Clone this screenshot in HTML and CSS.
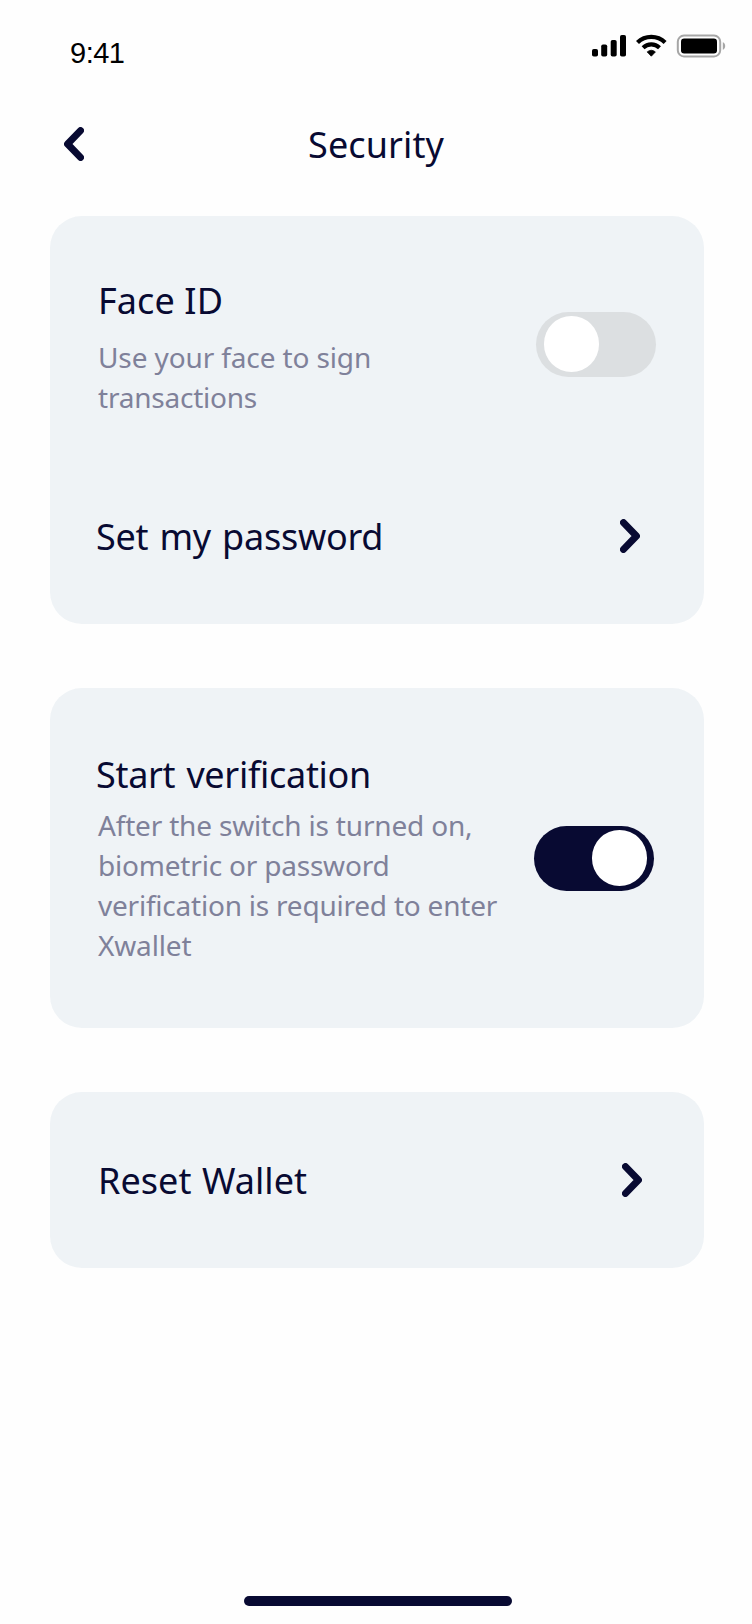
FILE: index.html
```html
<!DOCTYPE html>
<html lang="en">
<head>
<meta charset="utf-8">
<title>Security</title>
<link rel="stylesheet" href="styles.css">
</head>
<body>
<div class="screen">
  <div class="status">
    <span class="clock">9:41</span>
    <svg class="indicators" width="134" height="24" viewBox="0 0 134 24">
      <rect x="0" y="15" width="6" height="7.5" rx="1.8"/>
      <rect x="9.2" y="10.5" width="6" height="12" rx="1.8"/>
      <rect x="18.7" y="6" width="6" height="16.5" rx="1.8"/>
      <rect x="28" y="1" width="6" height="21.5" rx="1.8"/>
      <g fill="none" stroke="#000" stroke-width="4.2">
        <path d="M45.5 8.5A19.5 19.5 0 0 1 73.1 8.5"/>
        <path d="M51.1 13.7A12 12 0 0 1 67.5 13.7"/>
      </g>
      <path d="M55.2 17.9A6.6 6.6 0 0 1 63.4 17.9L59.3 22.2Z" stroke="#000" stroke-width=".8" stroke-linejoin="round"/>
      <rect x="85.8" y="1.6" width="42.4" height="20.8" rx="6.2" fill="none" stroke="#a6a6a6" stroke-width="2"/>
      <rect x="89" y="4.6" width="36" height="14.8" rx="3.2"/>
      <path d="M130.8 8.2C134 9.4 134 14.6 130.8 15.8Z" fill="#a6a6a6"/>
    </svg>
  </div>

  <header class="header">
    <svg class="chevron" width="20" height="34" viewBox="0 0 20 34"><path d="M16.5 3.6L3.6 17L16.5 30.4"/></svg>
    <h1 class="title security">Security</h1>
  </header>

  <main class="cards">
    <section class="card card-access">
      <div class="row row-face">
        <div class="copy">
          <h2 class="title face">Face ID</h2>
          <p class="note"><span class="use">Use your face to sign</span><br><span class="trans">transactions</span></p>
        </div>
        <div class="toggle"><span class="knob"></span></div>
      </div>
      <div class="row row-password">
        <h2 class="title password">Set my password</h2>
        <svg class="chevron" width="20" height="34" viewBox="0 0 20 34"><path d="M3.5 3.6L16.4 17L3.5 30.4"/></svg>
      </div>
    </section>

    <section class="card card-verify">
      <div class="row row-verify">
        <div class="copy">
          <h2 class="title start">Start verification</h2>
          <p class="note"><span class="v1">After the switch is turned on,</span><br><span class="v2">biometric or password</span><br><span class="v3">verification is required to enter</span><br><span class="v4">Xwallet</span></p>
        </div>
        <div class="toggle on"><span class="knob"></span></div>
      </div>
    </section>

    <section class="card card-reset">
      <div class="row row-reset">
        <h2 class="title reset">Reset Wallet</h2>
        <svg class="chevron" width="20" height="34" viewBox="0 0 20 34"><path d="M3.5 3.6L16.4 17L3.5 30.4"/></svg>
      </div>
    </section>
  </main>

  <div class="home"></div>
</div>
</body>
</html>
```
FILE: styles.css
```css
* { box-sizing: border-box; margin: 0; padding: 0; }
body { background: #fefefe; }
.screen {
  display: flex;
  flex-direction: column;
  width: 752px;
  height: 1624px;
  background: #fefefe;
  color: #080a32;
  font-family: "Noto Sans", "Open Sans", sans-serif;
}
.status {
  display: flex;
  justify-content: space-between;
  align-items: flex-start;
  height: 120px;
  padding: 34px 26px 0 70px;
}
.clock {
  color: #000;
  font: 29px/38px "Liberation Sans", Arial, sans-serif;
  letter-spacing: -0.5px;
}
.indicators { display: block; }
.header {
  display: grid;
  grid-template-columns: 64px 1fr 64px;
  height: 96px;
  padding: 0 64px;
}
.header .chevron { margin-top: 7px; }
.title {
  font-size: 36px;
  font-weight: 400;
  line-height: 48px;
  padding-top: 1px;
  margin-bottom: -1px;
  white-space: nowrap;
}
.security { justify-self: center; letter-spacing: 0.1px; }
.face { letter-spacing: 0.1px; }
.password { letter-spacing: -0.25px; word-spacing: 2px; }
.start { letter-spacing: -0.3px; word-spacing: 2px; }
.reset { letter-spacing: 0.05px; word-spacing: 1px; }
.chevron {
  flex: none;
  display: block;
  fill: none;
  stroke: #080a32;
  stroke-width: 7;
  stroke-linecap: round;
  stroke-linejoin: round;
}
.cards {
  display: flex;
  flex-direction: column;
  gap: 64px;
  padding: 0 48px 0 50px;
}
.card {
  border-radius: 32px;
  background: #eff3f6;
  padding: 60px 48px 0;
}
.card-access { height: 408px; }
.card-verify { height: 340px; padding: 62px 50px 0 46px; }
.card-reset { height: 176px; padding: 64px 62px 0 48px; }
.row {
  display: flex;
  justify-content: space-between;
  align-items: flex-start;
}
.row-password { margin: 95px 16px 0 -2px; }
.row .chevron { margin-top: 7px; }
.note {
  margin-top: 13px;
  color: #7f819a;
  font-size: 28px;
  line-height: 40px;
  white-space: nowrap;
}
.use { letter-spacing: -0.12px; }
.trans { letter-spacing: -0.22px; }
.v1 { letter-spacing: -0.18px; }
.v2 { letter-spacing: -0.2px; }
.v3 { letter-spacing: -0.22px; }
.v4 { letter-spacing: -0.15px; }
.row-verify .note { margin: 7px 0 0 2px; }
.toggle {
  flex: none;
  width: 120px;
  height: 64.7px;
  margin-top: 36px;
  padding: 4.3px 8px;
  border-radius: 33px;
  background: #dcdfe1;
}
.toggle.on {
  display: flex;
  justify-content: flex-end;
  margin-top: 76px;
  padding-right: 7px;
  background: #080a32;
}
.row-verify { height: 200px; }
.knob {
  display: block;
  width: 55.4px;
  height: 55.4px;
  border-radius: 50%;
  background: #fff;
}
.home {
  width: 268px;
  height: 10px;
  margin: auto 0 18px 244px;
  border-radius: 5px;
  background: #080a32;
}
```
